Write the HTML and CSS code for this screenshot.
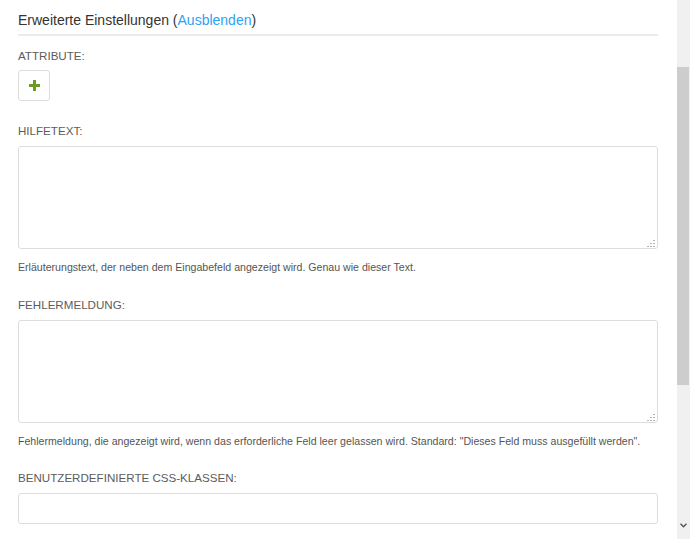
FILE: index.html
```html
<!DOCTYPE html>
<html lang="de">
<head>
<meta charset="utf-8">
<title>Erweiterte Einstellungen</title>
<link rel="stylesheet" href="styles.css">
</head>
<body>
<div class="page">
  <main class="content">
    <h2 class="section-title">Erweiterte Einstellungen (<a href="#" class="toggle">Ausblenden</a>)</h2>

    <div class="field field-first">
      <label class="label">ATTRIBUTE:</label>
      <button class="add-btn" type="button" aria-label="Hinzufügen">
        <svg width="11" height="11" viewBox="0 0 11 11"><path d="M4 0h3v4h4v3H7v4H4V7H0V4h4z" fill="#6a9c25"/></svg>
      </button>
    </div>

    <div class="field">
      <label class="label">HILFETEXT:</label>
      <div class="area-wrap">
        <textarea class="area"></textarea>
        <svg class="grip" width="8" height="7" viewBox="0 0 8 7"><g fill="#b4b4b4"><rect x="6" y="0" width="2" height="1"/><rect x="3" y="3" width="2" height="1"/><rect x="6" y="3" width="2" height="1"/><rect x="0" y="6" width="2" height="1"/><rect x="3" y="6" width="2" height="1"/><rect x="6" y="6" width="2" height="1"/></g></svg>
      </div>
      <p class="help">Erläuterungstext, der neben dem Eingabefeld angezeigt wird. Genau wie dieser Text.</p>
    </div>

    <div class="field">
      <label class="label">FEHLERMELDUNG:</label>
      <div class="area-wrap">
        <textarea class="area"></textarea>
        <svg class="grip" width="8" height="7" viewBox="0 0 8 7"><g fill="#b4b4b4"><rect x="6" y="0" width="2" height="1"/><rect x="3" y="3" width="2" height="1"/><rect x="6" y="3" width="2" height="1"/><rect x="0" y="6" width="2" height="1"/><rect x="3" y="6" width="2" height="1"/><rect x="6" y="6" width="2" height="1"/></g></svg>
      </div>
      <p class="help">Fehlermeldung, die angezeigt wird, wenn das erforderliche Feld leer gelassen wird. Standard: "Dieses Feld muss ausgefüllt werden".</p>
    </div>

    <div class="field field-last">
      <label class="label">BENUTZERDEFINIERTE CSS-KLASSEN:</label>
      <input class="input" type="text">
    </div>
  </main>
  <div class="scrollbar">
    <div class="sb-space"></div>
    <div class="sb-thumb"></div>
    <div class="sb-rest"></div>
    <div class="sb-arrow">
      <svg width="7" height="5" viewBox="0 0 7 5"><path d="M0.5 0.8 L3.5 3.8 L6.5 0.8" fill="none" stroke="#555" stroke-width="1.4"/></svg>
    </div>
  </div>
</div>
</body>
</html>
```

FILE: styles.css
```css
* { box-sizing: border-box; }
html, body { margin: 0; padding: 0; background: #fff; }
body {
  font-family: "Liberation Sans", Arial, sans-serif;
  color: #555;
  overflow: hidden;
}
.page {
  display: flex;
  height: 539px;
}
.content {
  flex: 1;
  padding: 10px 19px 0 18px;
}
.section-title {
  margin: 0;
  font-size: 14px;
  font-weight: normal;
  line-height: 20px;
  color: #333;
  padding-bottom: 4px;
  border-bottom: 2px solid #ebebeb;
}
.toggle {
  color: #2ea3f2;
  text-decoration: none;
}
.field { margin-top: 22px; }
.field-first { margin-top: 12px; }
.field-last { margin-top: 21px; }
.label {
  display: block;
  font-size: 11.6px;
  line-height: 16px;
  color: #5c5c5c;
  margin-bottom: 7px;
}
.field-first .label { margin-bottom: 6px; }
.add-btn {
  display: flex;
  align-items: center;
  justify-content: center;
  width: 32px;
  height: 31px;
  padding: 0;
  background: #fff;
  border: 1px solid #dddddd;
  border-radius: 3px;
}
.area-wrap { position: relative; }
.area {
  display: block;
  width: 100%;
  height: 103px;
  border: 1px solid #dddddd;
  border-radius: 3px;
  resize: none;
  font-family: inherit;
  background: #fff;
}
.grip {
  position: absolute;
  right: 3px;
  bottom: 2px;
}
.help {
  margin: 11px 0 0;
  font-size: 10.6px;
  line-height: 15px;
  color: #555;
}
.input {
  display: block;
  width: 100%;
  height: 31px;
  border: 1px solid #dddddd;
  border-radius: 3px;
  font-family: inherit;
}
.scrollbar {
  width: 13px;
  display: flex;
  flex-direction: column;
  background: #f0f0f0;
}
.sb-space { height: 67px; }
.sb-thumb {
  height: 318px;
  background: #cdcdcd;
  margin-right: 1px;
}
.sb-rest { flex: 1; }
.sb-arrow {
  height: 20px;
  display: flex;
  justify-content: center;
  align-items: flex-start;
  padding-top: 4px;
}
```
